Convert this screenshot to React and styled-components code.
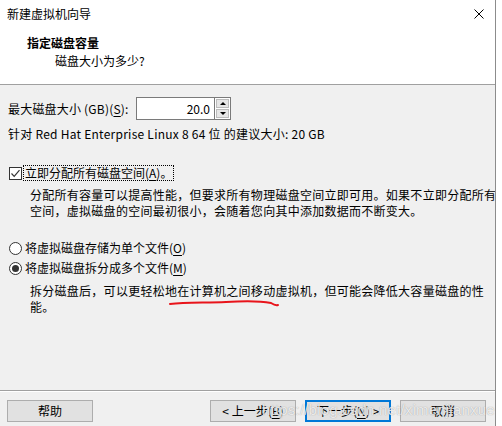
import styled, { createGlobalStyle } from "styled-components";

const GlobalStyle = createGlobalStyle`
  html, body {
    margin: 0;
    padding: 0;
    background: #ffffff;
  }
  body {
    font-family: "Microsoft YaHei UI", "Noto Sans CJK SC", "Noto Sans", sans-serif;
    font-size: 12px;
    color: #000;
  }
`;

const Window = styled.div`
  position: relative;
  width: 496px;
  height: 426px;
  box-sizing: border-box;
  border-right: 1px solid #8c8c8c;
  background: #f0f0f0;
  display: flex;
  flex-direction: column;
  overflow: hidden;
`;

const TitleBar = styled.div`
  height: 28px;
  background: #fff;
  display: flex;
  align-items: center;
  justify-content: space-between;
  padding: 0 10px 0 7px;
`;

const TitleText = styled.span`
  line-height: 16px;
`;

const CloseBtn = styled.div`
  width: 12px;
  height: 12px;
  display: flex;
  align-items: center;
  justify-content: center;
`;

const Header = styled.div`
  height: 57px;
  box-sizing: border-box;
  background: #fff;
  border-bottom: 1px solid #a0a0a0;
  padding: 7px 0 0 27px;
`;

const HeaderTitle = styled.div`
  font-weight: bold;
  line-height: 16px;
`;

const HeaderSub = styled.div`
  line-height: 16px;
  margin: 2px 0 0 28px;
`;

const Body = styled.div`
  padding: 0 8px;
  display: flex;
  flex-direction: column;
`;

const SizeRow = styled.div`
  margin-top: 12px;
  height: 23px;
  display: flex;
  align-items: center;
`;

const Label = styled.span`
  width: 128px;
  line-height: 16px;
  letter-spacing: 0.2px;
`;

const SpinBox = styled.div`
  display: flex;
  height: 23px;
`;

const SpinInput = styled.div`
  width: 79px;
  height: 23px;
  box-sizing: border-box;
  border: 1px solid #7a7a7a;
  background: #fff;
  text-align: right;
  padding-right: 4px;
  line-height: 21px;
`;

const SpinButtons = styled.div`
  width: 16px;
  display: flex;
  flex-direction: column;
  border: 1px solid #7a7a7a;
  border-left: none;
  box-sizing: border-box;
  background: #fff;
  padding: 1px;
  gap: 1px;
`;

const SpinArrow = styled.div`
  flex: 1;
  background: #e6e6e6;
  border: 1px solid #bcbcbc;
  display: flex;
  align-items: center;
  justify-content: center;
  &::after {
    content: "";
    border-left: 3px solid transparent;
    border-right: 3px solid transparent;
    ${(p) =>
      p.$up
        ? "border-bottom: 3px solid #000;"
        : "border-top: 3px solid #000;"}
  }
`;

const Line = styled.div`
  line-height: 16px;
  margin-top: ${(p) => p.$mt || 0}px;
  padding-left: ${(p) => p.$indent || 0}px;
  letter-spacing: ${(p) => p.$ls || 0}px;
  white-space: nowrap;
`;

const OptionRow = styled.div`
  display: flex;
  align-items: center;
  height: 16px;
  margin-top: ${(p) => p.$mt || 0}px;
  padding-left: 1px;
`;

const CheckBox = styled.div`
  width: 13px;
  height: 13px;
  box-sizing: border-box;
  border: 1px solid #333;
  background: #fff;
  display: flex;
  align-items: center;
  justify-content: center;
`;

const Radio = styled.div`
  width: 13px;
  height: 13px;
  box-sizing: border-box;
  border: 1px solid #333;
  border-radius: 50%;
  background: #fff;
  display: flex;
  align-items: center;
  justify-content: center;
  &::after {
    content: "";
    width: 7px;
    height: 7px;
    border-radius: 50%;
    background: ${(p) => (p.$checked ? "#333" : "transparent")};
  }
`;

const OptionText = styled.span`
  margin-left: 2px;
  padding: 0 1px;
  line-height: 14px;
  outline: ${(p) => (p.$focus ? "1px dotted #000" : "none")};
`;

const Key = styled.u`
  text-underline-offset: 2px;
`;

const Footer = styled.div`
  margin-top: auto;
  border-top: 1px solid #a0a0a0;
  box-shadow: inset 0 1px 0 #fff;
  padding: 9px 9px 4px 7px;
  display: flex;
  gap: 9px;
`;

const Button = styled.div`
  width: 86px;
  height: 22px;
  box-sizing: border-box;
  background: #e1e1e1;
  border: ${(p) => (p.$default ? "2px solid #0078d7" : "1px solid #adadad")};
  display: flex;
  align-items: center;
  justify-content: center;
  line-height: 16px;
  margin-left: ${(p) => (p.$push ? "auto" : "0")};
`;

const Watermark = styled.div`
  position: absolute;
  left: 262px;
  top: 401px;
  font-family: "Liberation Sans", Arial, sans-serif;
  font-size: 15px;
  color: rgba(255, 255, 255, 0.8);
  text-shadow: 0 0 1px rgba(110, 110, 110, 0.7);
  pointer-events: none;
  letter-spacing: 0.2px;
`;

const Scribble = styled.svg`
  position: absolute;
  left: 166px;
  top: 298px;
  pointer-events: none;
`;

export default function App() {
  return (
    <>
      <GlobalStyle />
      <Window>
        <TitleBar>
          <TitleText>新建虚拟机向导</TitleText>
          <CloseBtn>
            <svg width="10" height="10" viewBox="0 0 10 10">
              <path d="M0.5 0.5 L9.5 9.5 M9.5 0.5 L0.5 9.5" stroke="#000" strokeWidth="1" />
            </svg>
          </CloseBtn>
        </TitleBar>
        <Header>
          <HeaderTitle>指定磁盘容量</HeaderTitle>
          <HeaderSub>磁盘大小为多少?</HeaderSub>
        </Header>
        <Body>
          <SizeRow>
            <Label>
              最大磁盘大小 (GB)(<Key>S</Key>):
            </Label>
            <SpinBox>
              <SpinInput>20.0</SpinInput>
              <SpinButtons>
                <SpinArrow $up />
                <SpinArrow />
              </SpinButtons>
            </SpinBox>
          </SizeRow>
          <Line $mt={6} $ls={0.25}>
            针对 Red Hat Enterprise Linux 8 64 位 的建议大小: 20 GB
          </Line>
          <OptionRow $mt={23}>
            <CheckBox>
              <svg width="11" height="11" viewBox="0 0 11 11">
                <path d="M1.5 5.5 L4.2 8.3 L9.5 2.2" fill="none" stroke="#333" strokeWidth="1.2" />
              </svg>
            </CheckBox>
            <OptionText $focus>
              立即分配所有磁盘空间(<Key>A</Key>)。
            </OptionText>
          </OptionRow>
          <Line $mt={6} $indent={22} $ls={0.27}>
            分配所有容量可以提高性能，但要求所有物理磁盘空间立即可用。如果不立即分配所有
          </Line>
          <Line $indent={22} $ls={0.27}>
            空间，虚拟磁盘的空间最初很小，会随着您向其中添加数据而不断变大。
          </Line>
          <OptionRow $mt={21}>
            <Radio />
            <OptionText>
              将虚拟磁盘存储为单个文件(<Key>O</Key>)
            </OptionText>
          </OptionRow>
          <OptionRow $mt={4}>
            <Radio $checked />
            <OptionText>
              将虚拟磁盘拆分成多个文件(<Key>M</Key>)
            </OptionText>
          </OptionRow>
          <Line $mt={7} $indent={22} $ls={0.27}>
            拆分磁盘后，可以更轻松地在计算机之间移动虚拟机，但可能会降低大容量磁盘的性
          </Line>
          <Line $indent={22} $ls={0.27}>
            能。
          </Line>
        </Body>
        <Footer>
          <Button>帮助</Button>
          <Button $push>
            &lt; 上一步(<Key>B</Key>)
          </Button>
          <Button $default>
            下一步(<Key>N</Key>) &gt;
          </Button>
          <Button>取消</Button>
        </Footer>
        <Scribble width="116" height="12" viewBox="0 0 116 12">
          <path
            d="M4 6 C 20 4, 40 5, 60 4 C 75 3, 95 3, 105 5 C 108 7, 110 8, 112 7"
            fill="none"
            stroke="#e8141b"
            strokeWidth="2"
            strokeLinecap="round"
          />
        </Scribble>
        <Watermark>https://blog.csdn.net/ximenjianxue</Watermark>
      </Window>
    </>
  );
}
